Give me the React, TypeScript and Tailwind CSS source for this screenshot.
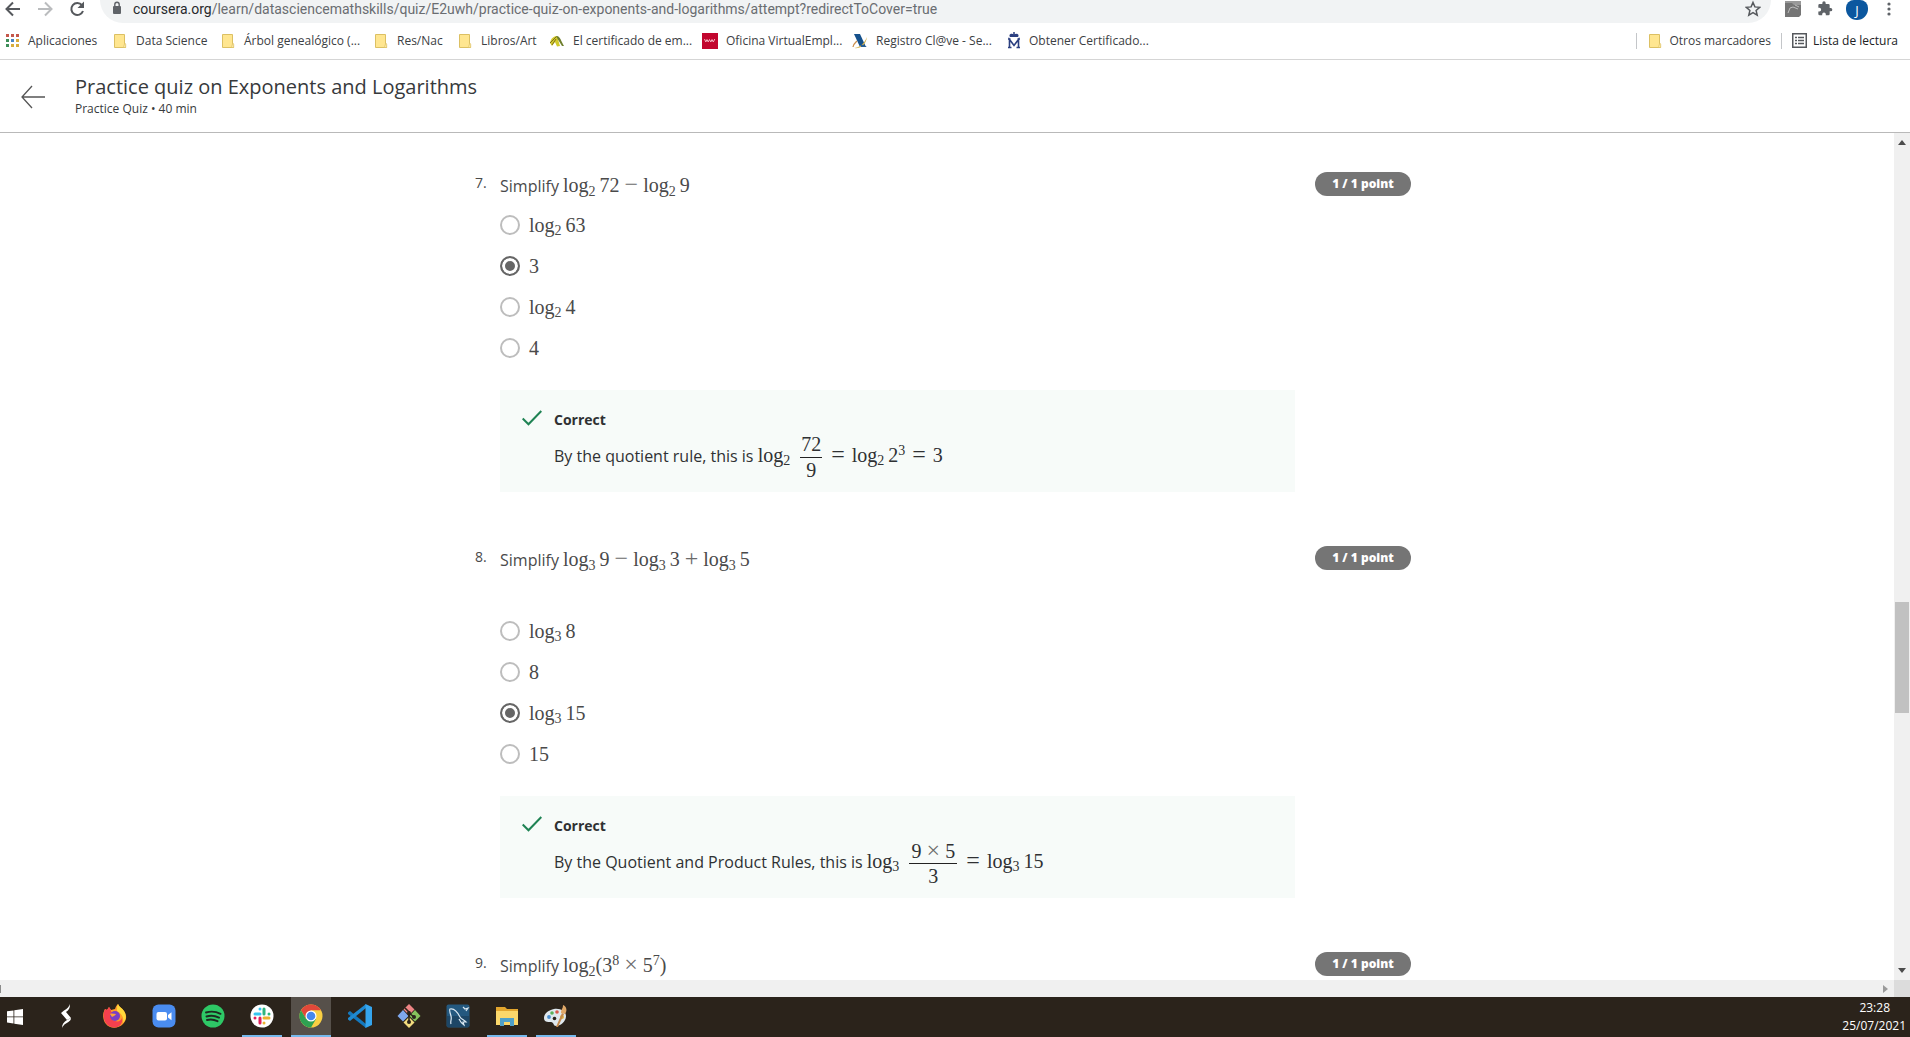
import React from "react";

const ui = "font-['Open_Sans',sans-serif]";

/* ---------- browser icons ---------- */

function Folder() {
  return (
    <svg width="16" height="16" viewBox="0 0 16 16" className="shrink-0" aria-hidden="true">
      <path d="M2.5 1.5h10V11l1 3.500h-11z" fill="#ffe690" stroke="#dcc063" />
      <path d="M11.5 14.5l1.2-4.5 1 1v3.5z" fill="#fff0b0" stroke="#dcc063" strokeWidth="0.7" />
    </svg>
  );
}

function AppsGrid() {
  const colors = ["#c5574b", "#c5574b", "#c5574b", "#3c8e58", "#4a86c5", "#d8ac3c", "#3c8e58", "#d8ac3c", "#d8ac3c"];
  return (
    <svg width="14" height="14" viewBox="0 0 14 14" className="shrink-0" aria-hidden="true">
      {colors.map((c, i) => (
        <rect key={i} x={(i % 3) * 5} y={Math.floor(i / 3) * 5} width="3" height="3" fill={c} />
      ))}
    </svg>
  );
}

function Leaf() {
  return (
    <svg width="16" height="16" viewBox="0 0 16 16" className="shrink-0" aria-hidden="true">
      <path d="M1 10C2 5 5 3 8 3l3 10-3 .500L6 9l-3 4z" fill="#d2ca28" />
      <path d="M7 3c4-1 5 5 8 10h-2L8 5z" fill="#6f7f2e" />
      <path d="M1 10l6-6M3 12l4-6" stroke="#7d6f21" fill="none" />
    </svg>
  );
}

function Madrid() {
  return (
    <svg width="16" height="16" viewBox="0 0 16 16" className="shrink-0" aria-hidden="true">
      <rect width="16" height="16" fill="#c2062e" />
      <path d="M2.5 6l1.3 3L5 6.5 6.2 9l1.3-2.5L8.8 9 10 6.5 11.3 9l1.5-3" stroke="#f3b4c0" fill="none" />
    </svg>
  );
}

function Tax() {
  return (
    <svg width="16" height="16" viewBox="0 0 16 16" className="shrink-0" aria-hidden="true">
      <path d="M2 1h6l6 13H8z" fill="#15518c" />
      <path d="M2 15c5 0 10-4 13-11-1 8-7 12-13 11z" fill="#d3b14b" />
      <path d="M1 14c0-3 2-4 4-6" stroke="#c98d4b" strokeWidth="1.300" fill="none" />
      <path d="M9 11l6 3H9z" fill="#2a5f92" />
    </svg>
  );
}

function CrownM() {
  return (
    <svg width="14" height="17" viewBox="0 0 14 17" className="shrink-0" aria-hidden="true">
      <path d="M3 5C1 2 5 1 7 2.5 9 1 13 2 11 5z" fill="#2b3f80" />
      <path d="M7 0v3" stroke="#2b3f80" strokeWidth="1.5" />
      <path d="M2.5 15.5v-8L7 13.500l4.500-6v8M1 15.500h3.500M9.500 15.500H13M1 7h2.500M10.500 7H13" stroke="#2b3f80" strokeWidth="1.600" fill="none" />
    </svg>
  );
}

const bookmarks: { label: string; icon: React.ReactNode; width: string }[] = [
  { label: "Aplicaciones", icon: <AppsGrid />, width: "w-[106px]" },
  { label: "Data Science", icon: <Folder />, width: "w-[108px]" },
  { label: "Árbol genealógico (...", icon: <Folder />, width: "w-[153px]" },
  { label: "Res/Nac", icon: <Folder />, width: "w-[84px]" },
  { label: "Libros/Art", icon: <Folder />, width: "w-[92px]" },
  { label: "El certificado de em...", icon: <Leaf />, width: "w-[153px]" },
  { label: "Oficina VirtualEmpl...", icon: <Madrid />, width: "w-[150px]" },
  { label: "Registro Cl@ve - Se...", icon: <Tax />, width: "w-[155px]" },
  { label: "Obtener Certificado...", icon: <CrownM />, width: "w-[160px]" },
];

function Toolbar() {
  return (
    <div className="flex h-6 items-start gap-2 overflow-hidden bg-white pr-4 text-[#5f6368]">
      <div className="flex w-[92px] shrink-0 gap-4 pl-[5px]">
        <button aria-label="Atrás" className="h-[18px] w-4">
          <svg width="16" height="18" viewBox="0 0 16 18" fill="none" stroke="#55585c" strokeWidth="2">
            <path d="M15 9H2.500M8 2.500L1.500 9 8 15.500" />
          </svg>
        </button>
        <button aria-label="Adelante" className="h-[18px] w-4">
          <svg width="16" height="18" viewBox="0 0 16 18" fill="none" stroke="#babcbe" strokeWidth="2">
            <path d="M1 9h12.500M8 2.500L14.500 9 8 15.500" />
          </svg>
        </button>
        <button aria-label="Recargar" className="h-[18px] w-4">
          <svg width="16" height="18" viewBox="0 0 16 18">
            <path d="M13 5.200A6 6 0 1 0 14 11" fill="none" stroke="#55585c" strokeWidth="2" />
            <path d="M15 1.500V8H8.500z" fill="#55585c" />
          </svg>
        </button>
      </div>
      <div className="flex h-[23px] flex-1 items-start rounded-b-full bg-[#f1f3f4] pr-2.5 pl-[11px]">
        <svg width="12" height="16" viewBox="0 0 12 16" className="shrink-0" aria-hidden="true">
          <rect x="2" y="6" width="8" height="8" rx="1" fill="#5f6368" />
          <path d="M3.800 7V4.500a2.200 2.200 0 0 1 4.400 0V7" fill="none" stroke="#5f6368" strokeWidth="1.400" />
        </svg>
        <div className="min-w-0 flex-1 truncate pl-2.5 font-[Roboto,sans-serif] text-[14px] leading-[18px] text-[#6a6d71]">
          <span className="text-[#27292c]">coursera.org</span>
          /learn/datasciencemathskills/quiz/E2uwh/practice-quiz-on-exponents-and-logarithms/attempt?redirectToCover=true
        </div>
        <button aria-label="Añadir a marcadores">
          <svg width="16" height="18" viewBox="0 0 16 18">
            <path d="M8 2.500l1.900 4.400 4.800.4-3.600 3.200 1.100 4.700L8 12.700l-4.200 2.500 1.100-4.700L1.300 7.300l4.800-.4z" fill="none" stroke="#55585c" strokeWidth="1.500" />
          </svg>
        </button>
      </div>
      <div className="flex shrink-0 items-start pl-1.5">
        <button aria-label="Extensión" className="w-8">
          <svg width="16" height="18" viewBox="0 0 16 18">
            <path d="M0 3h16v12l-2 2H0z" fill="#757575" />
            <path d="M0 1h16v4H9L7 3H0z" fill="#999" />
            <path d="M3 13l2-5 3-1 5 2M10 5l4 2" stroke="#bdbdbd" fill="none" />
          </svg>
        </button>
        <button aria-label="Extensiones" className="w-[29px]">
          <svg width="16" height="18" viewBox="0 0 24 27">
            <path d="M20.500 12H19V8a2 2 0 0 0-2-2h-4V4.500a2.500 2.500 0 0 0-5 0V6H4a2 2 0 0 0-2 2v3.800h1.500a2.700 2.700 0 0 1 0 5.400H2V21a2 2 0 0 0 2 2h3.800v-1.500a2.700 2.700 0 0 1 5.400 0V23H17a2 2 0 0 0 2-2v-4h1.500a2.500 2.500 0 0 0 0-5z" fill="#5f6368" />
          </svg>
        </button>
        <button aria-label="Perfil" className="h-5 w-[22px] rounded-t-[8px] rounded-b-[11px] bg-[#0b579f] text-[13px] leading-[18px] text-white">
          J
        </button>
        <button aria-label="Menú" className="ml-4">
          <svg width="10" height="18" viewBox="0 0 10 18" fill="#5f6368">
            <circle cx="5" cy="4" r="1.600" />
            <circle cx="5" cy="9" r="1.600" />
            <circle cx="5" cy="14" r="1.600" />
          </svg>
        </button>
      </div>
    </div>
  );
}

function Bookmarks() {
  return (
    <nav className="flex h-9 items-center justify-between border-b border-[#d5d5d5] bg-white pb-0.5 text-[12px] text-[#3c4043]">
      <div className="flex items-center pl-[6px]">
        {bookmarks.map((b) => (
          <a key={b.label} href="#" className={"flex items-center gap-2 whitespace-nowrap " + b.width}>
            {b.icon}
            {b.label}
          </a>
        ))}
      </div>
      <div className="flex items-center whitespace-nowrap pr-3">
        <span className="mr-2.5 h-4 w-px bg-[#c4c6c9]" />
        <a href="#" className="flex items-center gap-1.5">
          <Folder />
          Otros marcadores
        </a>
        <span className="mx-2.5 h-4 w-px bg-[#c4c6c9]" />
        <a href="#" className="flex items-center gap-1.5 text-[#202124]">
          <svg width="15" height="15" viewBox="0 0 15 15" fill="none" stroke="#55585c" aria-hidden="true">
            <rect x=".75" y=".75" width="13.5" height="13.5" strokeWidth="1.5" />
            <path d="M3 4.500h2M6 4.500h6M3 7.500h2M6 7.500h6M3 10.500h2M6 10.500h6" strokeWidth="1.600" />
          </svg>
          Lista de lectura
        </a>
      </div>
    </nav>
  );
}

function QuizHeader() {
  return (
    <header className="flex h-[73px] shrink-0 items-center border-b border-[#b9b9b9] bg-white pt-px text-[#373a3c]">
      <button aria-label="Back" className="ml-5 w-[55px]">
        <svg width="26" height="24" viewBox="0 0 26 24" fill="none" stroke="#555" strokeWidth="1.300">
          <path d="M25 12H2M12 1L2 12l10 11" />
        </svg>
      </button>
      <div>
        <h1 className="text-[20px] leading-6">Practice quiz on Exponents and Logarithms</h1>
        <p className="mt-px text-[12px] leading-[18px]">Practice Quiz • 40 min</p>
      </div>
    </header>
  );
}

/* ---------- maths ---------- */

function M({ children }: { children: React.ReactNode }) {
  return <span className="font-['Liberation_Serif',serif] text-[20px] leading-none whitespace-nowrap">{children}</span>;
}

function Log({ base, children }: { base: string; children?: React.ReactNode }) {
  return (
    <>
      log<sub className="mr-1 text-[14px]">{base}</sub>
      {children}
    </>
  );
}

function Op({ children }: { children: string }) {
  return <span className="mx-[5px] text-[24px] leading-none text-[#6b6b6b]">{children}</span>;
}

function Eq() {
  return <span className="mx-[7px] text-[24px] leading-none">=</span>;
}

function Frac({ top, bottom, width }: { top: React.ReactNode; bottom: React.ReactNode; width: string }) {
  return (
    <span className={"mr-0.5 ml-1.5 inline-flex flex-col text-center align-middle leading-6 " + width}>
      <span className="h-[26px] border-b border-[#222]">{top}</span>
      <span>{bottom}</span>
    </span>
  );
}

/* ---------- questions ---------- */

type Question = {
  n: number;
  prompt: React.ReactNode;
  options: React.ReactNode[];
  chosen: number;
  gap: string;
  feedback?: React.ReactNode;
};

const questions: Question[] = [
  {
    n: 7,
    prompt: <><Log base="2">72</Log><Op>−</Op><Log base="2">9</Log></>,
    options: [<Log base="2">63</Log>, "3", <Log base="2">4</Log>, "4"],
    chosen: 1,
    gap: "mt-2",
    feedback: (
      <>
        By the quotient rule, this is{" "}
        <M>
          <Log base="2" />
          <Frac top="72" bottom="9" width="w-[22px]" />
          <Eq />
          <Log base="2">2<sup className="text-[14px]">3</sup></Log>
          <Eq />3
        </M>
      </>
    ),
  },
  {
    n: 8,
    prompt: <><Log base="3">9</Log><Op>−</Op><Log base="3">3</Log><Op>+</Op><Log base="3">5</Log></>,
    options: [<Log base="3">8</Log>, "8", <Log base="3">15</Log>, "15"],
    chosen: 2,
    gap: "mt-10",
    feedback: (
      <>
        By the Quotient and Product Rules, this is{" "}
        <M>
          <Log base="3" />
          <Frac top={<>9<Op>×</Op>5</>} bottom="3" width="w-[48px]" />
          <Eq />
          <Log base="3">15</Log>
        </M>
      </>
    ),
  },
  {
    n: 9,
    prompt: (
      <>
        log<sub className="text-[14px]">2</sub>(3<sup className="text-[14px]">8</sup>
        <Op>×</Op>5<sup className="text-[14px]">7</sup>)
      </>
    ),
    options: [],
    chosen: -1,
    gap: "mt-2",
  },
];

function QuestionBlock({ q }: { q: Question }) {
  return (
    <section className="flex items-start">
      <div className="w-[25px] shrink-0 text-[14px] leading-[22px]">{q.n}.</div>
      <div className="min-w-0 flex-1">
        <div className="h-6 text-[16px] leading-[22px] whitespace-nowrap">
          Simplify <M>{q.prompt}</M>
        </div>
        {q.options.length > 0 && (
          <fieldset className={q.gap}>
            {q.options.map((o, i) => (
              <label key={i} className="flex h-[41px] items-center gap-[9px]">
                <input
                  type="radio"
                  name={"q" + q.n}
                  defaultChecked={i === q.chosen}
                  className="h-5 w-5 appearance-none rounded-full border-2 border-[#bdbdbd] bg-white checked:border-[#666] checked:bg-[#666] checked:shadow-[inset_0_0_0_3px_white]"
                />
                <M>{o}</M>
              </label>
            ))}
          </fieldset>
        )}
        {q.feedback && (
          <div className="mt-[22px] flex h-[102px] bg-[#f7fbf9] px-[22px] pt-[18px]">
            <svg width="20" height="16" viewBox="0 0 20 16" className="mt-0.5 mr-3 shrink-0" fill="none" stroke="#1f8354" strokeWidth="2" aria-hidden="true">
              <path d="M.7 8.500l5.800 5.800L19.300 1" />
            </svg>
            <div className="text-[#2f3133]">
              <p className="text-[14px] leading-6 font-bold">Correct</p>
              <p className="h-12 text-[16px] leading-[46px] whitespace-nowrap">{q.feedback}</p>
            </div>
          </div>
        )}
      </div>
      <div className="ml-5 h-6 w-24 shrink-0 rounded-full bg-[#757575] text-center text-[12px] leading-6 font-extrabold text-white">
        1 / 1 point
      </div>
    </section>
  );
}

/* ---------- taskbar ---------- */

const tasks: { name: string; state: string; art: React.ReactNode }[] = [
  {
    name: "S",
    state: "border-transparent",
    art: (
      <>
        <path d="M16 0c-1 3-3 5-6 6.500L7 9l6 7 4-2-5-6c3-2 4-4 4-8z" fill="#fff" />
        <path d="M13 16l4-2c0 3-3 4-5 5.500-2 1-3 2.500-4 4.500 0-4 2-6 5-8z" fill="#fff" />
      </>
    ),
  },
  {
    name: "Firefox",
    state: "border-transparent",
    art: (
      <>
        <path d="M2 5l2 1 2-3 2 3 4-1c1-3 2-4 3-5 1 3 4 4 6 7 3 4 3 9-1 13-5 5-13 5-17 0C0 17-1 10 2 5z" fill="#ff9a2c" />
        <path d="M2 5l2 1 2-3 2 3c-1 2 2 3 4 3-4 2-4 7 0 8 3 1 6 0 7-3 1 5-2 9-7 9.500C3 24-2 14 2 5z" fill="#f5404e" />
        <path d="M15 0c1 3 4 4 6 7 3 5 2 9-1 12 1-6-1-9-6-12 0-3 0-5 1-7z" fill="#ffd93b" />
        <circle cx="12" cy="12" r="5" fill="#7a3fc4" />
        <path d="M7 10c2-1 4 0 6 0-1 2-3 2-4 3z" fill="#ffa436" />
      </>
    ),
  },
  {
    name: "Zoom",
    state: "border-transparent",
    art: (
      <>
        <rect x="0.5" y="0.5" width="23" height="23" rx="6" fill="#4a8cf0" />
        <rect x="4.500" y="8" width="10.500" height="8.500" rx="2" fill="#fff" />
        <path d="M16 11l3.500-2.700v7.900L16 13.500z" fill="#fff" />
      </>
    ),
  },
  {
    name: "Spotify",
    state: "border-transparent",
    art: (
      <>
        <circle cx="12" cy="12" r="11.500" fill="#2ec866" />
        <path d="M5 8.500c5-1.500 10-1 14.500 1.300M5.500 12.500c4-1.200 8.500-.8 12.500 1.200M6 16c3.500-1 7-.6 10.500 1.200" stroke="#1d2a20" strokeWidth="1.900" strokeLinecap="round" fill="none" />
      </>
    ),
  },
  {
    name: "Slack",
    state: "border-[#76b9ed]",
    art: (
      <>
        <circle cx="12" cy="12" r="11.500" fill="#fff" />
        <g strokeWidth="3" strokeLinecap="round">
          <path d="M10 5v0M5 10h5" stroke="#36c5f0" />
          <path d="M14 5v5M19 10v0" stroke="#2eb67d" />
          <path d="M14 14h5M14 19v0" stroke="#ecb22e" />
          <path d="M10 14v5M5 14v0" stroke="#e01e5a" />
        </g>
      </>
    ),
  },
  {
    name: "Chrome",
    state: "border-[#76b9ed] bg-[#56504a]",
    art: (
      <>
        <circle cx="12" cy="12" r="11.500" fill="#f9cf43" />
        <path d="M2 6.250A11.500 11.500 0 0 1 22 6.250H12L7 14.900z" fill="#e0483a" />
        <path d="M2 6.250A11.500 11.500 0 0 0 12 23.500L17 14.900H7z" fill="#2fa152" />
        <circle cx="12" cy="12" r="5.500" fill="#fff" />
        <circle cx="12" cy="12" r="4.300" fill="#4687ee" />
      </>
    ),
  },
  {
    name: "Visual Studio Code",
    state: "border-transparent",
    art: (
      <>
        <path d="M0 8.500L2 7l16 13v4L0 10z" fill="#1478bd" />
        <path d="M0 15.500L2 17 18 4V0L0 14z" fill="#1f8ad2" />
        <path d="M17.500 0L24 3v18l-6.500 3z" fill="#35a5ee" />
      </>
    ),
  },
  {
    name: "Git",
    state: "border-transparent",
    art: (
      <>
        <path d="M12 0l5.500 5.500L12 11 6.500 5.500z" fill="#ef8585" />
        <path d="M6 6l5.500 6L6 17.500.5 12z" fill="#7fa8ee" />
        <path d="M18 6l5.500 6-5.500 5.500-5.500-5.500z" fill="#86c25d" />
        <path d="M12 13l5.500 5.500L12 24l-5.500-5.500z" fill="#f3dc7e" />
        <path d="M8 4l4 4v10M12 9l5 4" stroke="#2a221b" strokeWidth="1.600" fill="none" />
        <circle cx="12" cy="18" r="2" fill="#2a221b" />
        <circle cx="17" cy="13" r="2" fill="#2a221b" />
        <circle cx="12" cy="9" r="2" fill="#2a221b" />
      </>
    ),
  },
  {
    name: "MySQL Workbench",
    state: "border-transparent",
    art: (
      <>
        <rect x="0.5" y="0.5" width="23" height="23" rx="2" fill="#24587f" />
        <path d="M1 12h22v11H1z" fill="#1d4666" />
        <path d="M5 20c-1-3 1-4 0-8-1-3-2-6-1-7 4-1 8 4 10 8 1 2 4 3 6 5l-3 0 1 3c-3-2-4-4-5-6M17 3l2 2 3-1-2 3" stroke="#dbe8f2" strokeWidth="1.200" fill="none" />
      </>
    ),
  },
  {
    name: "Explorador de archivos",
    state: "border-[#76b9ed]",
    art: (
      <>
        <path d="M1 3h9l2 2h11v16H1z" fill="#e3a62e" />
        <path d="M1 7h22v14H1z" fill="#fbd76b" />
        <path d="M5 22v-8h14v8h-4v-4H9v4z" fill="#4fa0c9" />
      </>
    ),
  },
  {
    name: "Paint",
    state: "border-[#76b9ed]",
    art: (
      <>
        <path d="M10 5c6-1 12 2 12 7 0 6-6 10-10 10-3 0-2-4-5-4-4 0-7 0-7-4 0-5 5-8 10-9z" fill="#dfe8ee" />
        <circle cx="5" cy="13" r="1.900" fill="#4a8fd0" />
        <circle cx="8" cy="9" r="1.800" fill="#5ab05a" />
        <circle cx="13" cy="8" r="1.800" fill="#d95a4c" />
        <circle cx="18" cy="13" r="2" fill="#e2b640" />
        <circle cx="10.500" cy="14.500" r="1.800" fill="#2a221b" />
        <path d="M12 23l6-14 2 1-6 13z" fill="#c58b4f" />
        <path d="M17 9c0-4 2-4 2-8 3 1 5 5 2 9z" fill="#e0a868" />
      </>
    ),
  },
];

function Taskbar() {
  return (
    <footer className="flex h-10 shrink-0 items-stretch justify-between bg-[#2b231b] text-white">
      <div className="flex gap-[9px]">
        <button aria-label="Inicio" className="w-[37px] pl-[7px]">
          <svg width="16" height="16" viewBox="0 0 16 16" fill="#fff">
            <path d="M0 2.300l6.500-.9v6.100H0zM7.300 1.300L16 0v7.500H7.300zM0 8.300h6.500v6.200L0 13.600zM7.300 8.300H16V16l-8.700-1.300z" />
          </svg>
        </button>
        {tasks.map((t) => (
          <button
            key={t.name}
            aria-label={t.name}
            className={"flex w-10 items-center justify-center border-b-2 " + t.state}
          >
            <svg width="24" height="24" viewBox="0 0 24 24">{t.art}</svg>
          </button>
        ))}
      </div>
      <div className="flex flex-col justify-center pr-1 text-right text-[12px] leading-[18px]">
        <time className="pr-4">23:28</time>
        <time>25/07/2021</time>
      </div>
    </footer>
  );
}

export default function App() {
  return (
    <div className={"flex h-screen flex-col overflow-hidden bg-white " + ui}>
      <Toolbar />
      <Bookmarks />
      <QuizHeader />
      <div className="flex min-h-0 flex-1">
        <main className="min-w-0 flex-1 overflow-hidden text-[#4a4a4a]">
          <div className="mx-auto flex max-w-[944px] flex-col gap-[54px] pt-[39px] pr-2">
            {questions.map((q) => (
              <QuestionBlock key={q.n} q={q} />
            ))}
          </div>
        </main>
        <div className="flex w-4 flex-col items-center bg-[#f0f0f0] py-[7px]">
          <svg width="8" height="5" viewBox="0 0 8 5" fill="#4c4c4c"><path d="M0 5l4-5 4 5z" /></svg>
          <div className="flex-[455]" />
          <div className="h-[111px] w-3.5 bg-[#c1c1c1]" />
          <div className="flex-[254]" />
          <svg width="8" height="5" viewBox="0 0 8 5" fill="#4c4c4c"><path d="M0 0h8L4 5z" /></svg>
        </div>
      </div>
      <div className="flex h-[17px] shrink-0 items-center bg-[#f0f0f0]">
        <div className="h-2 w-px bg-[#8b8b8b]" />
        <div className="flex-1" />
        <svg width="5" height="8" viewBox="0 0 5 8" fill="#9a9a9a" className="mr-1.5"><path d="M0 0l5 4-5 4z" /></svg>
        <div className="h-full w-4 bg-[#dcdcdc]" />
      </div>
      <Taskbar />
    </div>
  );
}
